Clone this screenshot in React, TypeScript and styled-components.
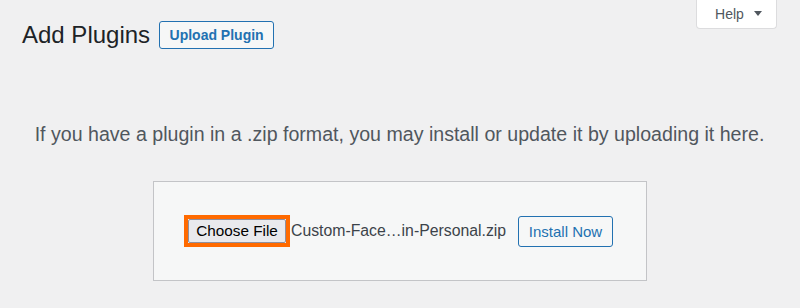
import React from "react";
import styled, { createGlobalStyle } from "styled-components";

const Global = createGlobalStyle`
  html, body { margin: 0; padding: 0; background: #f0f0f1; }
  body { font-family: "Liberation Sans", Arial, sans-serif; color: #1d2327; }
  * { box-sizing: border-box; }
`;

const Page = styled.div`
  width: 800px;
  height: 308px;
  padding: 0 23px 0 22px;
  overflow: hidden;
`;

const Header = styled.div`
  display: flex;
  justify-content: space-between;
  align-items: flex-start;
`;

const TitleGroup = styled.div`
  display: flex;
  align-items: center;
  gap: 9px;
  padding-top: 21px;
`;

const Title = styled.h1`
  margin: 0;
  font-size: 24px;
  font-weight: 400;
  line-height: 28px;
  color: #1d2327;
`;

const OutlineButton = styled.button<{ $w: number; $h: number; $size: number; $weight: number }>`
  width: ${(p) => p.$w}px;
  height: ${(p) => p.$h}px;
  padding: 0;
  border: 1px solid #2271b1;
  border-radius: 3px;
  background: #f6f7f7;
  color: #2271b1;
  font-family: "Liberation Sans", Arial, sans-serif;
  font-size: ${(p) => p.$size}px;
  font-weight: ${(p) => p.$weight};
  cursor: pointer;
`;

const HelpTab = styled.div`
  margin-top: -1px;
  width: 81px;
  height: 30px;
  background: #fff;
  border: 1px solid #dcdcde;
  border-top: none;
  border-radius: 0 0 4px 4px;
  display: flex;
  align-items: center;
  justify-content: center;
  gap: 10px;
  color: #50575e;
  font-size: 14px;
  padding: 1px 0 0 4px;
`;

const Caret = styled.span`
  width: 0;
  height: 0;
  border-left: 4px solid transparent;
  border-right: 4px solid transparent;
  border-top: 5px solid #50575e;
  margin-top: -2px;
`;

const Help = styled.p`
  margin: 0;
  padding-top: 72px;
  text-align: center;
  font-size: 19.6px;
  line-height: 26px;
  color: #50575e;
  white-space: nowrap;
`;

const UploadBox = styled.div`
  margin: 34px 0 0 131px;
  width: 494px;
  height: 100px;
  background: #f6f7f7;
  border: 1px solid #c3c4c7;
  display: flex;
  align-items: center;
  padding-left: 30px;
`;

const FileField = styled.div`
  display: flex;
  align-items: center;
`;

const Highlight = styled.div`
  border: 4px solid #ff6a00;
  display: flex;
`;

const ChooseButton = styled.button`
  width: 98px;
  height: 24px;
  padding: 0;
  background: #e9e9ed;
  border: 1px solid #8f8f9d;
  border-radius: 2px;
  font-family: "Liberation Sans", Arial, sans-serif;
  font-size: 15.3px;
  color: #000;
`;

const FileName = styled.span`
  margin-left: 1px;
  width: 216px;
  font-size: 15.8px;
  color: #3c434a;
  white-space: nowrap;
`;

const InstallWrap = styled.div`
  margin-left: 11px;
  margin-top: 1px;
`;

export default function App() {
  return (
    <>
      <Global />
      <Page>
        <Header>
          <TitleGroup>
            <Title>Add Plugins</Title>
            <OutlineButton $w={115} $h={28} $size={14} $weight={700}>
              Upload Plugin
            </OutlineButton>
          </TitleGroup>
          <HelpTab>
            Help <Caret />
          </HelpTab>
        </Header>
        <Help>
          If you have a plugin in a .zip format, you may install or update it by uploading it here.
        </Help>
        <UploadBox>
          <FileField>
            <Highlight>
              <ChooseButton>Choose File</ChooseButton>
            </Highlight>
            <FileName>Custom-Face…in-Personal.zip</FileName>
          </FileField>
          <InstallWrap>
            <OutlineButton $w={95} $h={31} $size={15} $weight={400}>
              Install Now
            </OutlineButton>
          </InstallWrap>
        </UploadBox>
      </Page>
    </>
  );
}
